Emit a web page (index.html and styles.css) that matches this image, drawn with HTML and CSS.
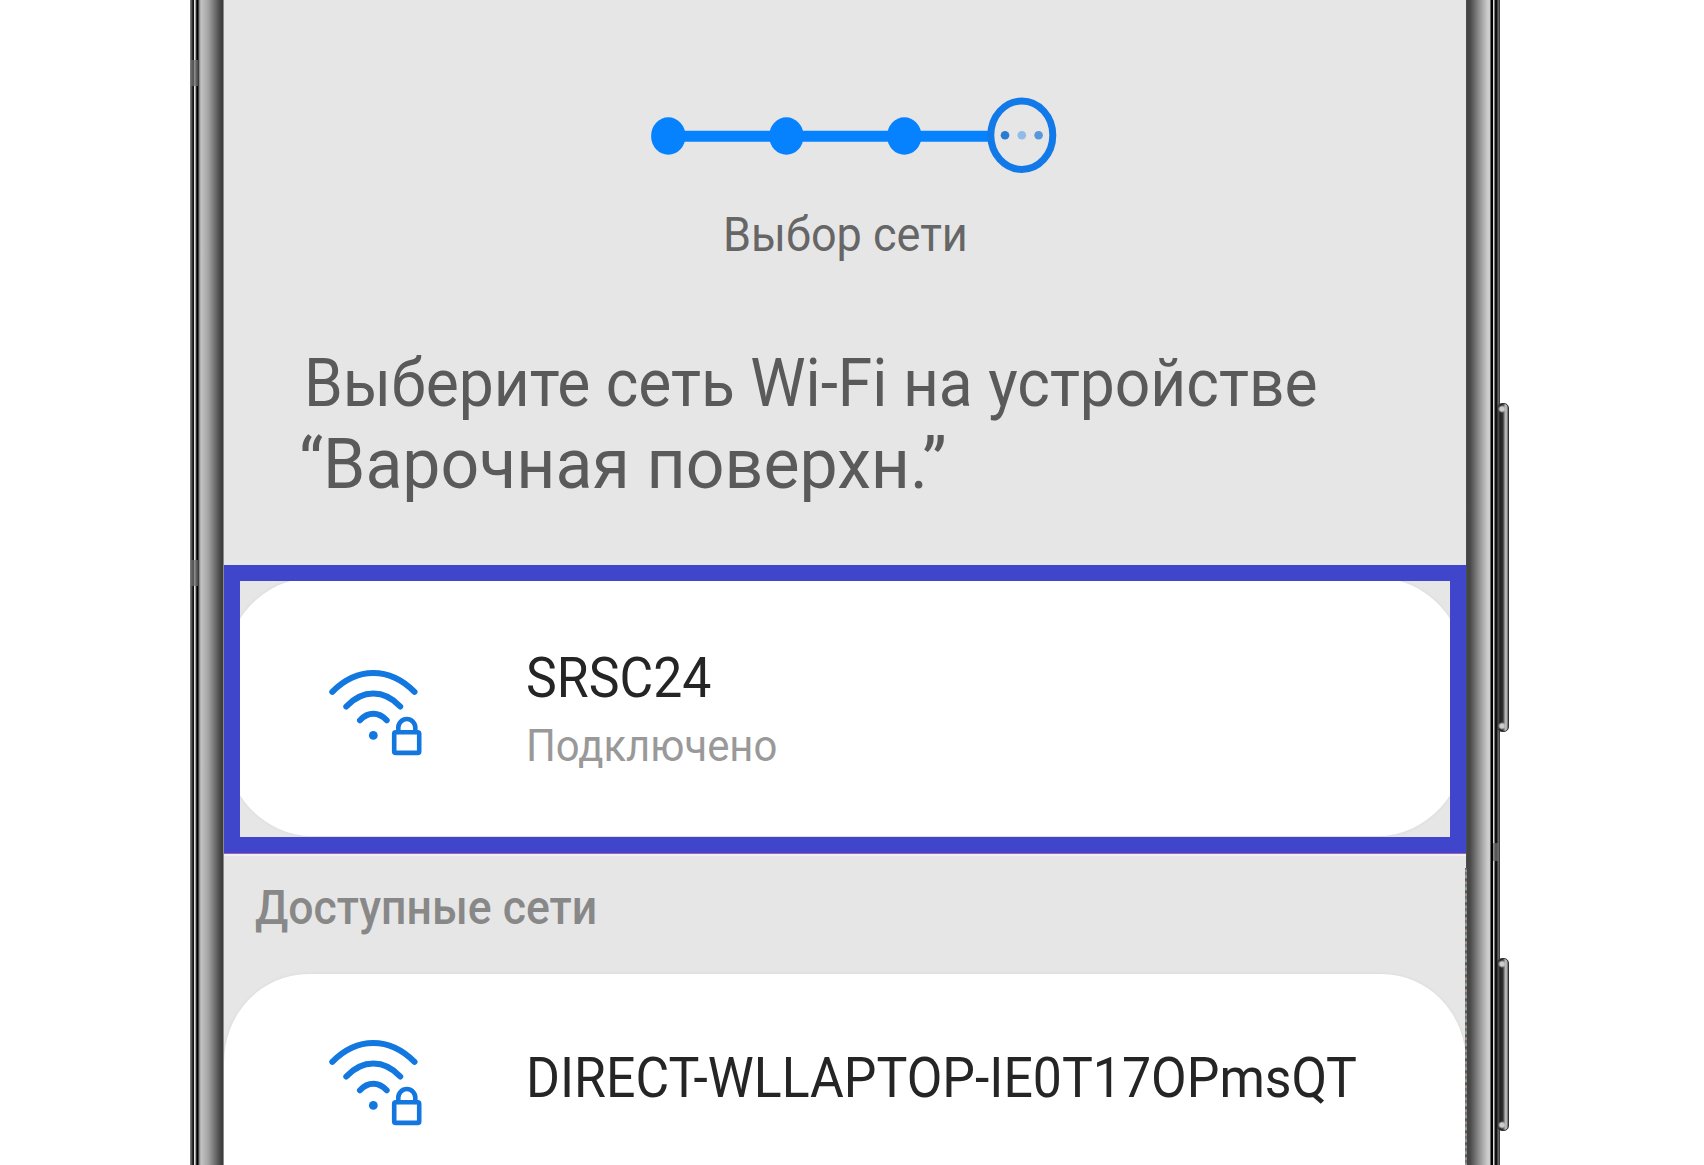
FILE: index.html
```html
<!DOCTYPE html>
<html lang="ru">
<head>
  <meta charset="UTF-8" />
  <meta name="viewport" content="width=device-width, initial-scale=1.0"/>
  <title>Выбор сети</title>
  <link rel="stylesheet" href="styles.css">
</head>
<body>
  <svg width="0" height="0" class="defs">
    <symbol id="wifi-lock" viewBox="0 0 104 96">
      <g fill="none" stroke="#1377e0" stroke-linecap="round" stroke-linejoin="round">
        <path stroke-width="6" d="M8.3 27.8Q27 9 49.3 9T90.5 27.8"/>
        <path stroke-width="6" d="M22.3 42.5Q34.5 29.6 49.3 29.6T76.2 42.5"/>
        <path stroke-width="6" d="M36 56.3Q42 49.8 49.3 49.8T62.7 56.3"/>
        <path stroke-width="4.6" d="M74.3 68V63.6a8.5 8.6 0 0 1 17 0V68"/>
        <rect stroke-width="4.6" x="70.2" y="68.3" width="25" height="20.6" rx="1.5"/>
      </g>
      <circle cx="49.3" cy="71.4" r="4.4" fill="#1377e0"/>
    </symbol>
  </svg>

  <div class="phone">
    <div class="frame frame-left"></div>

    <main class="screen">
      <svg class="steps" width="408" height="80" viewBox="0 0 408 80">
        <path d="M18 40.2H340" stroke="#0782ff" stroke-width="11"/>
        <ellipse cx="18.3" cy="40" rx="17.2" ry="18.8" fill="#0782ff"/>
        <ellipse cx="136.4" cy="40" rx="17.2" ry="18.8" fill="#0782ff"/>
        <ellipse cx="254.3" cy="40" rx="17.2" ry="18.8" fill="#0782ff"/>
        <ellipse cx="371.8" cy="39.2" rx="31" ry="34.2" fill="#e6e6e6" stroke="#127ae8" stroke-width="7"/>
        <circle cx="355" cy="39.2" r="4.3" fill="#2c7bd2"/>
        <circle cx="371.8" cy="39.2" r="4.3" fill="#91bbe8"/>
        <circle cx="388.6" cy="39.2" r="4.3" fill="#5798dc"/>
      </svg>
      <p class="step-name">Выбор сети</p>

      <h1>
        <span class="line1">Выберите сеть Wi-Fi на устройстве</span>
        <span class="line2">“Варочная поверхн.”</span>
      </h1>

      <section class="selected">
        <div class="card">
          <svg class="wifi"><use href="#wifi-lock"/></svg>
          <div class="network">
            <div class="name">SRSC24</div>
            <div class="state">Подключено</div>
          </div>
        </div>
      </section>

      <h2>Доступные сети</h2>

      <section class="card available">
        <svg class="wifi"><use href="#wifi-lock"/></svg>
        <div class="network">
          <div class="name">DIRECT-WLLAPTOP-IE0T17OPmsQT</div>
        </div>
      </section>
    </main>

    <div class="frame frame-right"></div>
    <div class="key volume"></div>
    <div class="key power"></div>
    <div class="seam seam-top"></div>
    <div class="seam seam-left"></div>
    <div class="seam seam-right"></div>
    <div class="edge"></div>
  </div>
</body>
</html>
```
FILE: styles.css
```css
body {
  font-family: Roboto, sans-serif;
  background-color: #fff;
  margin: 0;
  height: 1165px;
  overflow: hidden;
}
.defs {
  display: block;
}
.phone {
  position: relative;
  display: flex;
  width: 1310px;
  height: 1165px;
  margin-left: 190px;
}

/* metal sides of the phone */
.frame-left {
  width: 34px;
  background: linear-gradient(to right,
    #777 0, #777 1px, #333 2px, #222 3px, #000 4px, #000 4px, #e0e0e0 4px, #e0e0e0 5px,
    #555 6px, #000 7px, #000 8px, #777 9px, #c4c4c4 11px,
    #a5a5a5 18px, #777 24px, #484848 30px, #3a3a3a 33px, #8a8a8a 33px, #8a8a8a 34px);
}
.frame-right {
  width: 34px;
  background: linear-gradient(to right,
    #555 0, #444 1px, #484848 4px, #777 10px,
    #a5a5a5 16px, #cfcfcf 22px, #ccc 24px, #000 25px, #000 27px,
    #ddd 27px, #ddd 28px, #111 29px, #111 31px, #777 32px, #333 34px);
}
.key {
  position: absolute;
  left: 1307px;
  width: 12px;
  box-sizing: border-box;
  border: 1px solid #333;
  border-radius: 5px;
  background:
    radial-gradient(circle at 4px 5px, #ccc 2px, transparent 4px) top / 100% 11px no-repeat,
    radial-gradient(circle at 4px 6px, #ccc 2px, transparent 4px) bottom / 100% 11px no-repeat,
    linear-gradient(to right, #555 0, #222 2px, #333 5px, #777 6px, #ccc 8px, #666 10px);
}
.volume {
  top: 403px;
  height: 329px;
}
.power {
  top: 958px;
  height: 173px;
}
.seam {
  position: absolute;
  left: 1px;
  width: 7px;
  height: 26px;
  background-color: rgba(110, 110, 110, 0.75);
}
.seam-top {
  top: 60px;
}
.seam-left {
  top: 560px;
}
.seam-right {
  left: 1303px;
  top: 843px;
  width: 6px;
  height: 18px;
}
.edge {
  position: absolute;
  left: 1275px;
  top: 868px;
  width: 2px;
  height: 297px;
  background: repeating-linear-gradient(#555 0, #b99a92 3px, #666 5px, #9aa8a0 9px, #444 12px);
}

.screen {
  width: 1242px;
  background-color: #e6e6e6;
  overflow: hidden;
}
.steps {
  display: block;
  margin: 96px 0 0 426px;
}
.step-name {
  margin: 29px 0 0 499px;
  font-size: 48.5px;
  line-height: 60px;
  color: #666;
  transform: scaleX(0.928);
  transform-origin: left;
}
h1 {
  margin: 80px 0 62px;
  font-weight: normal;
  color: #5a5a5a;
}
h1 span {
  display: block;
  line-height: 78px;
  white-space: nowrap;
  transform-origin: left;
}
.line1 {
  margin-left: 80px;
  font-size: 66px;
  transform: scaleX(0.944);
}
.line2 {
  margin: 2px 0 0 75px;
  font-size: 70px;
  transform: scaleX(0.971);
}

.card {
  display: flex;
  box-sizing: border-box;
  padding-left: 100px;
  background-color: #fff;
  box-shadow: 0 0 3px #d5d5d5;
}
/* blue frame round the network that is in use */
.selected {
  height: 256px;
  border: 16px solid #4046cb;
  box-shadow: 0 1px #a05fb0, 0 3px #f1f1f1;
  overflow: hidden;
}
.selected .card {
  height: 258px;
  margin: -3px -16px 0;
  padding-top: 67px;
  border-radius: 88px / 96px;
}
.wifi {
  flex: none;
  width: 104px;
  height: 96px;
  margin-top: 19px;
}
.network {
  margin-left: 98px;
  white-space: nowrap;
}
.name {
  font-size: 56px;
  line-height: 66px;
  color: #252525;
  transform: scaleX(0.925);
  transform-origin: left;
}
.state {
  margin-top: 9px;
  font-size: 44.5px;
  line-height: 52px;
  color: #999;
  transform: scaleX(0.94);
  transform-origin: left;
}
h2 {
  margin: 27px 0 38px 31px;
  font-size: 48px;
  font-weight: 500;
  line-height: 56px;
  color: #888;
  transform: scaleX(0.928);
  transform-origin: left;
}
.available {
  height: 300px;
  padding-top: 71px;
  border-radius: 84px 84px 0 0 / 88px 88px 0 0;
}
.available .wifi {
  margin-top: -11px;
}
```
